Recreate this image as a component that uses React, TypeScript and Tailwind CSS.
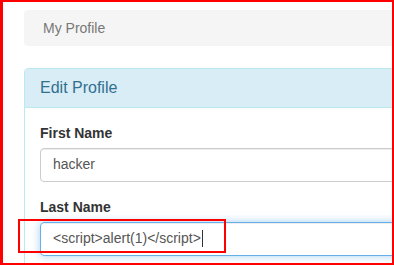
import React from "react";

export default function App() {
  return (
    <div
      className="relative w-[394px] h-[265px] overflow-hidden bg-white"
      style={{ fontFamily: '"Liberation Sans", Arial, Helvetica, sans-serif' }}
    >
      <div className="pl-[24px] pt-[10px] w-[600px]">
        {/* Breadcrumb */}
        <div className="h-[36px] bg-[#f5f5f5] rounded-[4px] px-[19px] flex items-center text-[14px] leading-[20px] text-[#777777]">
          My Profile
        </div>

        {/* Panel */}
        <div className="mt-[22px] border border-[#bce8f1] rounded-[4px] bg-white">
          <div className="bg-[#d9edf7] border-b border-[#bce8f1] rounded-t-[3px] px-[15px] py-[10px]">
            <h3 className="text-[16px] leading-[17.6px] text-[#31708f] m-0">Edit Profile</h3>
          </div>
          <div className="p-[15px]">
            <div className="mb-[15px]">
              <div className="text-[14px] leading-[20px] font-bold text-[#333333] mb-[5px]">First Name</div>
              <div className="h-[34px] border border-[#cccccc] rounded-[4px] px-[12px] flex items-center text-[14px] text-[#555555] shadow-[inset_0_1px_1px_rgba(0,0,0,0.075)]">
                hacker
              </div>
            </div>
            <div className="mb-[15px]">
              <div className="text-[14px] leading-[20px] font-bold text-[#333333] mb-[5px]">Last Name</div>
              <div className="h-[34px] border border-[#66afe9] rounded-[4px] px-[12px] flex items-center text-[14px] text-[#555555] shadow-[inset_0_1px_1px_rgba(0,0,0,0.075),0_0_8px_rgba(102,175,233,0.6)]">
                <span>&lt;script&gt;alert(1)&lt;/script&gt;</span>
                <span className="inline-block w-[1px] h-[17px] bg-[#333333] ml-[1px]"></span>
              </div>
            </div>
          </div>
        </div>
      </div>

      {/* Red highlight box around the input */}
      <div className="absolute left-[18px] top-[219px] w-[208px] h-[34px] border-2 border-[#ff0000] pointer-events-none"></div>

      {/* Outer red frame */}
      <div className="absolute inset-0 border-2 border-l-[3px] border-[#ff0000] pointer-events-none"></div>
    </div>
  );
}
